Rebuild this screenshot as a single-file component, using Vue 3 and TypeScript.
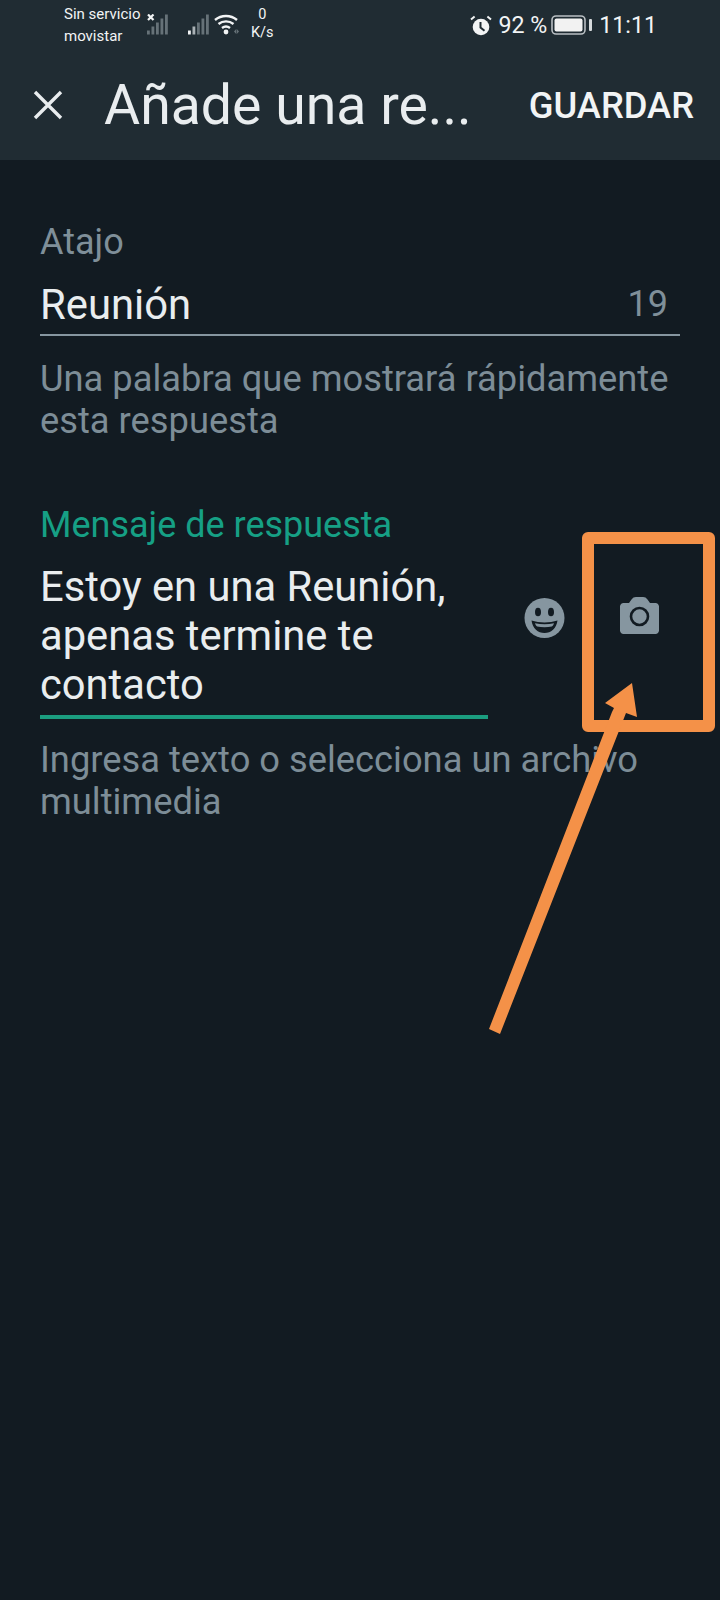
<script setup lang="ts">
const signalBars = [
  { x: 0, h: 4 },
  { x: 4.5, h: 8 },
  { x: 9, h: 12 },
  { x: 13.5, h: 16 },
  { x: 18, h: 20 },
]
</script>

<template>
  <div class="screen">
    <header class="top">
      <div class="status">
        <div class="carrier">
          <span>Sin servicio</span>
          <span>movistar</span>
        </div>
        <svg class="sim sim-one" viewBox="0 0 21 21" width="21" height="21">
          <rect v-for="b in signalBars" :key="b.x" :x="b.x" :y="20.500 - b.h" width="2.800" :height="b.h" fill="#667278" />
          <path d="M1 0.500l5.500 5.500M6.500 0.500L1 6" stroke="#f2f4f5" stroke-width="2.200" />
        </svg>
        <svg class="sim sim-two" viewBox="0 0 21 21" width="21" height="21">
          <rect
            v-for="(b, i) in signalBars"
            :key="b.x"
            :x="b.x"
            :y="20.500 - b.h"
            width="2.800"
            :height="b.h"
            :fill="i === 0 ? '#f2f4f5' : i === 1 ? '#aab2b6' : '#667278'"
          />
        </svg>
        <svg class="wifi" viewBox="0 0 25 22" width="25" height="22">
          <path d="M1 7a17 17 0 0 1 22 0M4.500 11a12 12 0 0 1 15 0M8 15a6.500 6.500 0 0 1 8 0" fill="none" stroke="#f2f4f5" stroke-width="2.400" />
          <circle cx="12" cy="19" r="2.400" fill="#f2f4f5" />
          <path d="M20 18.500l2.200-2.500v5zM22.800 16l2.200 2.500-2.200 2.500z" fill="#667278" />
        </svg>
        <div class="speed">
          <span>0</span>
          <span>K/s</span>
        </div>
        <div class="status-right">
          <svg class="alarm" viewBox="0 0 22 21" width="22" height="21">
            <circle cx="11" cy="12" r="8.300" fill="#f2f4f5" />
            <path d="M10.500 7v5.500l4 3.300" fill="none" stroke="#202c33" stroke-width="2" />
            <path d="M1 4.500l3.600-3M21 4.500l-3.600-3" stroke="#f2f4f5" stroke-width="2" />
          </svg>
          <span class="pct">92 %</span>
          <svg class="battery" viewBox="0 0 41 20" width="41" height="20">
            <rect x="1" y="1" width="33" height="18" rx="4" fill="none" stroke="#b9bfc3" stroke-width="1.600" />
            <rect x="3.500" y="3.500" width="28" height="13" rx="2" fill="#f2f2f2" />
            <rect x="38" y="4" width="3" height="12" rx="1" fill="#d6dadc" />
          </svg>
          <span class="clock">11:11</span>
        </div>
      </div>
      <div class="toolbar">
        <svg class="close" viewBox="0 0 30 30" width="30" height="30">
          <path d="M2 2l26 26M28 2L2 28" stroke="#e9edef" stroke-width="3.400" />
        </svg>
        <div class="title">Añade una re...</div>
        <div class="save">GUARDAR</div>
      </div>
    </header>

    <main class="form">
      <section class="field">
        <div class="label">Atajo</div>
        <div class="input-row">
          <span class="value">Reunión</span>
          <span class="count">19</span>
        </div>
        <p class="hint">Una palabra que mostrará rápidamente esta respuesta</p>
      </section>

      <section class="field message">
        <div class="label active">Mensaje de respuesta</div>
        <div class="message-row">
          <div class="message-input">Estoy en una Reunión, apenas termine te contacto</div>
          <svg class="emoji" viewBox="0 0 40 40" width="41" height="40">
            <circle cx="20" cy="20" r="20" fill="#8696a0" />
            <ellipse cx="13.500" cy="14" rx="3" ry="4.300" fill="#121b22" />
            <ellipse cx="26.500" cy="14" rx="3" ry="4.300" fill="#121b22" />
            <path d="M7 22.500c8 2.500 18 2.500 26 0C32 30.500 26.500 35 20 35S8 30.500 7 22.500z" fill="#121b22" />
            <path d="M10.500 25.200c6 1.300 13 1.300 19 0-.4 1.500-1.200 2.600-2.200 3.300-4.500 1-10.100 1-14.600 0-1-.7-1.800-1.800-2.200-3.300z" fill="#8696a0" />
          </svg>
          <svg class="camera" viewBox="0 0 39 37" width="39" height="37">
            <path d="M3.500 6H9l2.500-3.500C12.800 .8 14 0 16 0h7c2 0 3.200 .8 4.500 2.500L30 6h5.500C37.400 6 39 7.600 39 9.500v24c0 1.900-1.600 3.500-3.500 3.500h-32C1.600 37 0 35.400 0 33.500v-24C0 7.600 1.600 6 3.500 6z" fill="#8696a0" />
            <circle cx="19.500" cy="19.500" r="8.500" fill="none" stroke="#121b22" stroke-width="2.600" />
          </svg>
        </div>
        <p class="hint">Ingresa texto o selecciona un archivo multimedia</p>
      </section>
    </main>

    <!-- orange annotation drawn over the screenshot -->
    <svg class="annotation" viewBox="0 0 720 1600" width="720" height="1600">
      <rect x="588" y="538" width="121" height="188" fill="none" stroke="#f49148" stroke-width="12" stroke-linejoin="round" />
      <path d="M489 1029 L612 712 L614 708 L605 703 L632 683 L637 717 L626 713 L500 1034 Z" fill="#f49148" />
    </svg>
  </div>
</template>

<style scoped>
.screen {
  position: relative;
  width: 720px;
  height: 1600px;
  overflow: hidden;
  background: #121b22;
  font-family: Roboto, "Liberation Sans", sans-serif;
  color: #e9edef;
}

.top {
  height: 160px;
  background: #202c33;
}

.status {
  display: flex;
  align-items: flex-start;
  height: 50px;
  padding: 6px 0 0 64px;
  box-sizing: border-box;
  color: #f2f4f5;
}

.carrier {
  display: flex;
  flex-direction: column;
  width: 83px;
  margin-top: -3px;
  font-size: 15px;
  line-height: 22px;
}

.sim {
  margin-top: 8px;
}

.sim-two {
  margin-left: 20px;
}

.wifi {
  margin: 7px 0 0 5px;
}

.speed {
  display: flex;
  flex-direction: column;
  align-items: center;
  margin-left: 12px;
  font-size: 14.5px;
  line-height: 18px;
}

.status-right {
  display: flex;
  align-items: center;
  margin: 3px 0 0 auto;
  padding-right: 63px;
  font-size: 23.2px;
  line-height: 32px;
}

.pct {
  margin-left: 6px;
}

.battery {
  margin-left: 4px;
}

.clock {
  margin-left: 7px;
}

.toolbar {
  display: flex;
  align-items: center;
  height: 110px;
  padding: 0 26px 0 33px;
}

.close {
  flex: none;
}

.title {
  margin-left: 41px;
  flex: 1;
  font-size: 55.4px;
  white-space: nowrap;
  overflow: hidden;
}

.save {
  font-size: 36.3px;
  font-weight: 500;
  color: #f2f4f5;
}

.form {
  padding: 60px 40px 0;
}

.label {
  font-size: 36px;
  line-height: 44px;
  color: #7f8f99;
}

.label.active {
  color: #16a085;
}

.input-row {
  display: flex;
  align-items: center;
  justify-content: space-between;
  box-sizing: border-box;
  height: 72px;
  padding: 10px 12px 0 0;
  border-bottom: 2px solid #8696a0;
}

.value {
  font-size: 41.8px;
  color: #e9edef;
}

.count {
  font-size: 36px;
  color: #7f8f99;
}

.hint {
  margin: 22px 0 0;
  font-size: 36.3px;
  line-height: 42px;
  color: #7d8d97;
}

.message {
  margin-top: 61px;
}

.message .hint {
  margin-top: 20px;
}

.message-row {
  display: flex;
  align-items: flex-start;
}

.message-input {
  flex: none;
  width: 448px;
  padding: 15px 0 6px;
  font-size: 41.7px;
  line-height: 49px;
  border-bottom: 4px solid #1b9e80;
}

.emoji {
  margin: 51px 0 0 36px;
}

.camera {
  margin: 50px 0 0 55px;
}

.annotation {
  position: absolute;
  top: 0;
  left: 0;
  pointer-events: none;
}
</style>
